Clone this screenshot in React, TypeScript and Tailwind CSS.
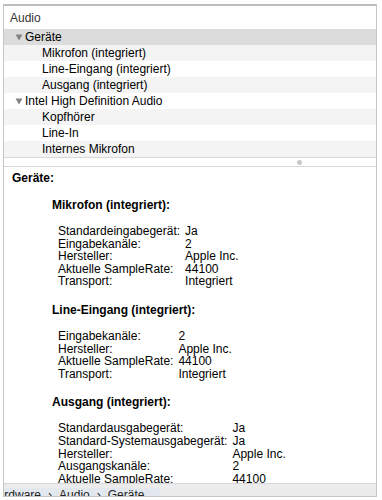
import React from 'react';

type Row = { label: string; level: 0 | 1; expandable?: boolean; selected?: boolean };

const treeRows: Row[] = [
  { label: 'Geräte', level: 0, expandable: true, selected: true },
  { label: 'Mikrofon (integriert)', level: 1 },
  { label: 'Line-Eingang (integriert)', level: 1 },
  { label: 'Ausgang (integriert)', level: 1 },
  { label: 'Intel High Definition Audio', level: 0, expandable: true },
  { label: 'Kopfhörer', level: 1 },
  { label: 'Line-In', level: 1 },
  { label: 'Internes Mikrofon', level: 1 },
];

const sections: { title: string; props: [string, string][] }[] = [
  {
    title: 'Mikrofon (integriert):',
    props: [
      ['Standardeingabegerät:', 'Ja'],
      ['Eingabekanäle:', '2'],
      ['Hersteller:', 'Apple Inc.'],
      ['Aktuelle SampleRate:', '44100'],
      ['Transport:', 'Integriert'],
    ],
  },
  {
    title: 'Line-Eingang (integriert):',
    props: [
      ['Eingabekanäle:', '2'],
      ['Hersteller:', 'Apple Inc.'],
      ['Aktuelle SampleRate:', '44100'],
      ['Transport:', 'Integriert'],
    ],
  },
  {
    title: 'Ausgang (integriert):',
    props: [
      ['Standardausgabegerät:', 'Ja'],
      ['Standard-Systemausgabegerät:', 'Ja'],
      ['Hersteller:', 'Apple Inc.'],
      ['Ausgangskanäle:', '2'],
      ['Aktuelle SampleRate:', '44100'],
    ],
  },
];

const Triangle = () => (
  <svg width="8" height="7" viewBox="0 0 8 7" className="shrink-0">
    <path d="M0.5 0.5 L7.5 0.5 L4 6.5 Z" fill="#848484" />
  </svg>
);

export default function App() {
  return (
    <div className="w-[382px] h-[500px] bg-white overflow-hidden pt-[4px] pl-[3px] font-['Liberation_Sans',Arial,sans-serif] text-[12px] text-black">
      <div className="w-[374px] h-[493px] flex flex-col border border-[#c6c6c6] border-t-2 border-t-[#bdbdbd] bg-white overflow-hidden">
        {/* Source list */}
        <div className="h-[23px] shrink-0 flex items-center pl-[6px] text-[#333]">Audio</div>
        {treeRows.map((row, i) => (
          <div
            key={row.label}
            className={`h-[16px] shrink-0 flex items-center leading-[14px] ${
              row.selected ? 'bg-[#dcdcdc]' : i % 2 === 1 ? 'bg-[#f4f4f4]' : 'bg-white'
            } ${row.level === 1 ? 'pl-[38px]' : 'pl-[11px] gap-[2px]'}`}
          >
            {row.expandable && <Triangle />}
            <span>{row.label}</span>
          </div>
        ))}

        {/* Splitter */}
        <div className="h-[10px] shrink-0 flex items-center border-t border-b border-[#d8d8d8] pl-[293px]">
          <div className="w-[5px] h-[5px] rounded-full bg-[#c9c9c9]" />
        </div>

        {/* Detail pane */}
        <div className="flex-1 min-h-0 overflow-hidden pl-[8px] pt-[4px] leading-[14px]">
          <div className="font-bold">Geräte:</div>
          {sections.map((s, idx) => (
            <div key={s.title} className={`pl-[40px] ${idx === 0 ? 'mt-[13px]' : 'mt-[15px]'}`}>
              <div className="font-bold">{s.title}</div>
              <div className="mt-[13px] pl-[6px] grid grid-cols-[auto_1fr] gap-x-[5px] leading-[12.6px]">
                {s.props.map(([k, v]) => (
                  <React.Fragment key={k}>
                    <span>{k}</span>
                    <span>{v}</span>
                  </React.Fragment>
                ))}
              </div>
            </div>
          ))}
        </div>

        {/* Path bar */}
        <div className="h-[13px] shrink-0 bg-[#ececec] border-t border-[#d6d6d6] overflow-hidden pt-[4px]">
          <div className="w-[156px] h-[14px] bg-[#e3e8ee] overflow-hidden">
            <div className="flex items-center gap-[7px] ml-[-15px] leading-[14px] whitespace-nowrap text-[#222]">
              <span>Hardware</span>
              <span>›</span>
              <span>Audio</span>
              <span>›</span>
              <span>Geräte</span>
            </div>
          </div>
        </div>
      </div>
    </div>
  );
}
